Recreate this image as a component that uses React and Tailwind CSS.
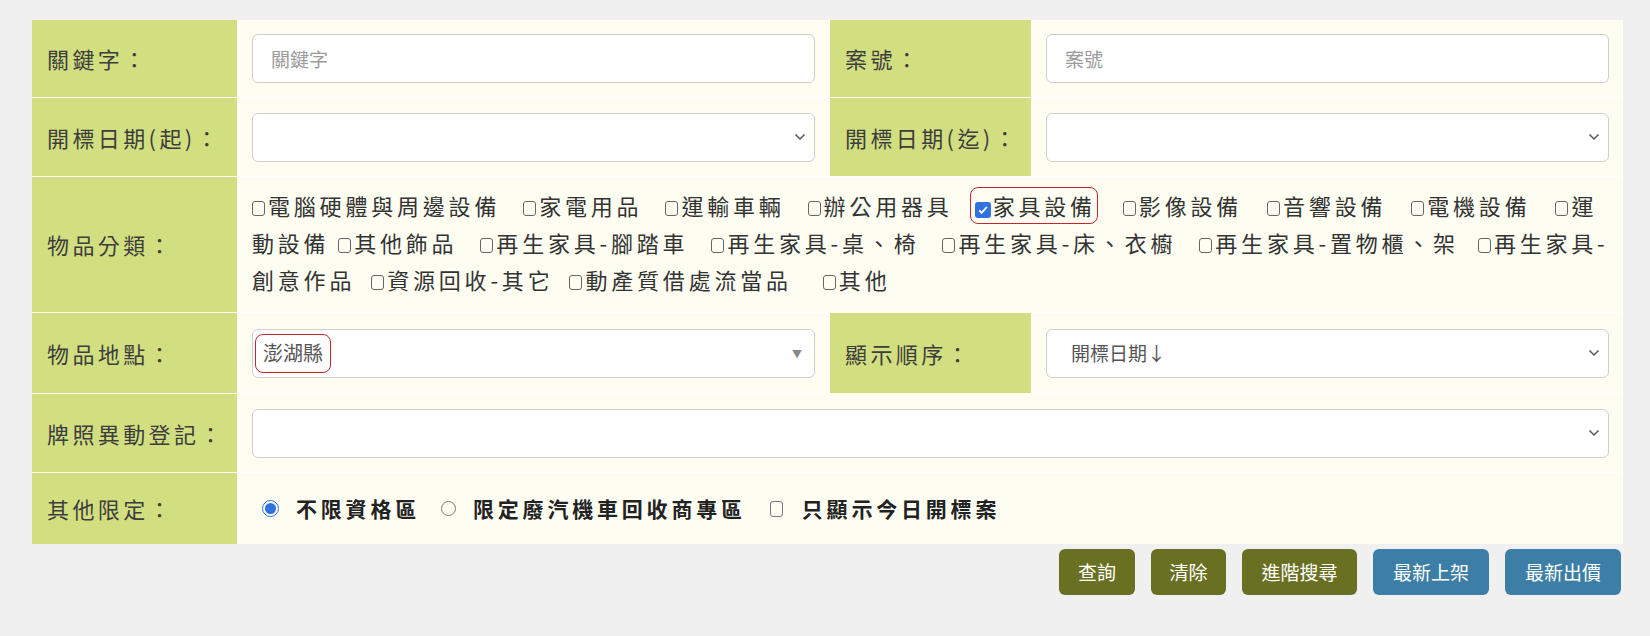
import React, { useState } from 'react';

const font = "font-['Noto_Sans_CJK_TC','Noto_Sans',sans-serif]";

const Label = ({ children }) => (
    <div className="flex items-center bg-[#d2df80] pl-[15px] text-[22px] tracking-[3.4px] text-[#3d3d3d]">
        {children}
    </div>
);

const Cell = ({ children, className = '' }) => (
    <div className={`flex items-center bg-[#fdfdf2] px-[15px] ${className}`}>{children}</div>
);

const Chevron = () => (
    <svg className="pointer-events-none absolute right-[9px] top-1/2 -translate-y-1/2" width="12" height="8" viewBox="0 0 12 8">
        <path d="M1.5 1.5l4.5 4.5 4.5-4.5" fill="none" stroke="#555" strokeWidth="1.5" />
    </svg>
);

const TextInput = ({ placeholder }) => (
    <input
        type="text"
        placeholder={placeholder}
        className="h-[49px] w-full rounded-[6px] border border-[#cfcfcf] bg-white px-[18px] text-[19px] text-[#444] outline-none placeholder:text-[#9b9b9b]"
    />
);

const Select = ({ value = '', pad = 'pl-[18px]' }) => (
    <div className="relative w-full">
        <div className={`flex h-[49px] w-full items-center rounded-[6px] border border-[#cfcfcf] bg-white ${pad} text-[19px] text-[#555]`}>
            {value}
        </div>
        <Chevron />
    </div>
);

const Box = ({ checked }) =>
    checked ? (
        <span className="mr-[2px] inline-flex h-[16px] w-[16px] items-center justify-center rounded-[3px] bg-[#2f72e0] align-[-1px]">
            <svg width="12" height="12" viewBox="0 0 12 12">
                <path d="M2.2 6.3l2.5 2.6L9.8 3" fill="none" stroke="#fff" strokeWidth="1.9" />
            </svg>
        </span>
    ) : (
        <span className="mr-[3px] inline-block h-[15px] w-[13px] rounded-[3px] border border-[#666] align-[-1px]" />
    );

const Item = ({ label, first, checked, gap = 'ml-[23px]' }) => (
    <span className={first ? '' : gap}>
        <Box checked={checked} />
        {label}
    </span>
);

const App = () => {
    const [zone, setZone] = useState('all');

    return (
        <div className={`min-h-[636px] w-full bg-[#f0f0f0] pl-[32px] pt-[20px] ${font}`}>
            <div className="grid w-[1591px] grid-cols-[205px_593px_201px_592px] grid-rows-[77px_78px_135px_80px_78px_71px] gap-y-px bg-white">
                {/* 關鍵字 / 案號 */}
                <Label>關鍵字：</Label>
                <Cell><TextInput placeholder="關鍵字" /></Cell>
                <Label>案號：</Label>
                <Cell className="pr-[14px]"><TextInput placeholder="案號" /></Cell>

                {/* 開標日期 */}
                <Label>開標日期(起)：</Label>
                <Cell><Select /></Cell>
                <Label>開標日期(迄)：</Label>
                <Cell className="pr-[14px]"><Select /></Cell>

                {/* 物品分類 */}
                <Label>物品分類：</Label>
                <div className="col-span-3 bg-[#fdfdf2] pl-[15px] pt-[10px] text-[22px] leading-[37px] tracking-[3.8px] text-[#333]">
                    <div className="whitespace-nowrap">
                        <Item first label="電腦硬體與周邊設備" />
                        <Item label="家電用品" />
                        <Item label="運輸車輛" />
                        <Item label="辦公用器具" />
                        <span className="ml-[17px] inline-block rounded-[8px] border-[1.5px] border-[#c4262e] pl-[4px] pr-[1px] leading-[35px]">
                            <Box checked />
                            家具設備
                        </span>
                        <Item label="影像設備" gap="ml-[25px]" />
                        <Item label="音響設備" gap="ml-[25px]" />
                        <Item label="電機設備" gap="ml-[25px]" />
                        <Item label="運" gap="ml-[25px]" />
                    </div>
                    <div className="whitespace-nowrap">
                        動設備 <Box />其他飾品
                        <Item label="再生家具-腳踏車" />
                        <Item label="再生家具-桌、椅" />
                        <Item label="再生家具-床、衣櫥" />
                        <Item label="再生家具-置物櫃、架" />
                        <Item label="再生家具-" gap="ml-[19px]" />
                    </div>
                    <div className="whitespace-nowrap">
                        創意作品
                        <Item label="資源回收-其它" gap="ml-[16px]" />
                        <Item label="動產質借處流當品" gap="ml-[16px]" />
                        <Item label="其他" gap="ml-[31px]" />
                    </div>
                </div>

                {/* 物品地點 / 顯示順序 */}
                <Label>物品地點：</Label>
                <Cell>
                    <div className="relative flex h-[49px] w-full items-center rounded-[6px] border border-[#cfcfcf] bg-white pl-[2px]">
                        <span className="flex h-[39px] items-center rounded-[8px] border-[1.5px] border-[#c4262e] px-[7px] text-[20px] text-[#555]">
                            澎湖縣
                        </span>
                        <span className="absolute right-[12px] top-1/2 -translate-y-1/2 text-[10px] text-[#888]">▼</span>
                    </div>
                </Cell>
                <Label>顯示順序：</Label>
                <Cell className="pr-[14px]"><Select value="開標日期↓" pad="pl-[24px]" /></Cell>

                {/* 牌照異動登記 */}
                <Label>牌照異動登記：</Label>
                <Cell className="col-span-3 pr-[14px]"><Select /></Cell>

                {/* 其他限定 */}
                <Label>其他限定：</Label>
                <Cell className="col-span-3 pl-[25px] text-[21px] font-bold tracking-[3.8px] text-[#222]">
                    <label className="flex items-center" onClick={() => setZone('all')}>
                        <span className={`flex h-[17px] w-[17px] items-center justify-center rounded-full border ${zone === 'all' ? 'border-[#2f72e0]' : 'border-[#777]'}`}>
                            {zone === 'all' && <span className="h-[11px] w-[11px] rounded-full bg-[#2f72e0]" />}
                        </span>
                        <span className="ml-[17px]">不限資格區</span>
                    </label>
                    <label className="ml-[21px] flex items-center" onClick={() => setZone('recycle')}>
                        <span className={`flex h-[15px] w-[15px] items-center justify-center rounded-full border ${zone === 'recycle' ? 'border-[#2f72e0]' : 'border-[#777]'}`}>
                            {zone === 'recycle' && <span className="h-[9px] w-[9px] rounded-full bg-[#2f72e0]" />}
                        </span>
                        <span className="ml-[17px]">限定廢汽機車回收商專區</span>
                    </label>
                    <label className="ml-[24px] flex items-center">
                        <span className="inline-block h-[16px] w-[13px] rounded-[3px] border border-[#777]" />
                        <span className="ml-[19px]">只顯示今日開標案</span>
                    </label>
                </Cell>
            </div>

            <div className="mt-[5px] flex w-[1589px] justify-end gap-[16px] text-[19px] text-white">
                <button className="h-[46px] w-[76px] rounded-[6px] bg-[#6a7022]">查詢</button>
                <button className="h-[46px] w-[75px] rounded-[6px] bg-[#6a7022]">清除</button>
                <button className="h-[46px] w-[115px] rounded-[6px] bg-[#6a7022]">進階搜尋</button>
                <button className="h-[46px] w-[116px] rounded-[6px] bg-[#3d7ea6]">最新上架</button>
                <button className="h-[46px] w-[116px] rounded-[6px] bg-[#3d7ea6]">最新出價</button>
            </div>
        </div>
    );
};

export default App;
